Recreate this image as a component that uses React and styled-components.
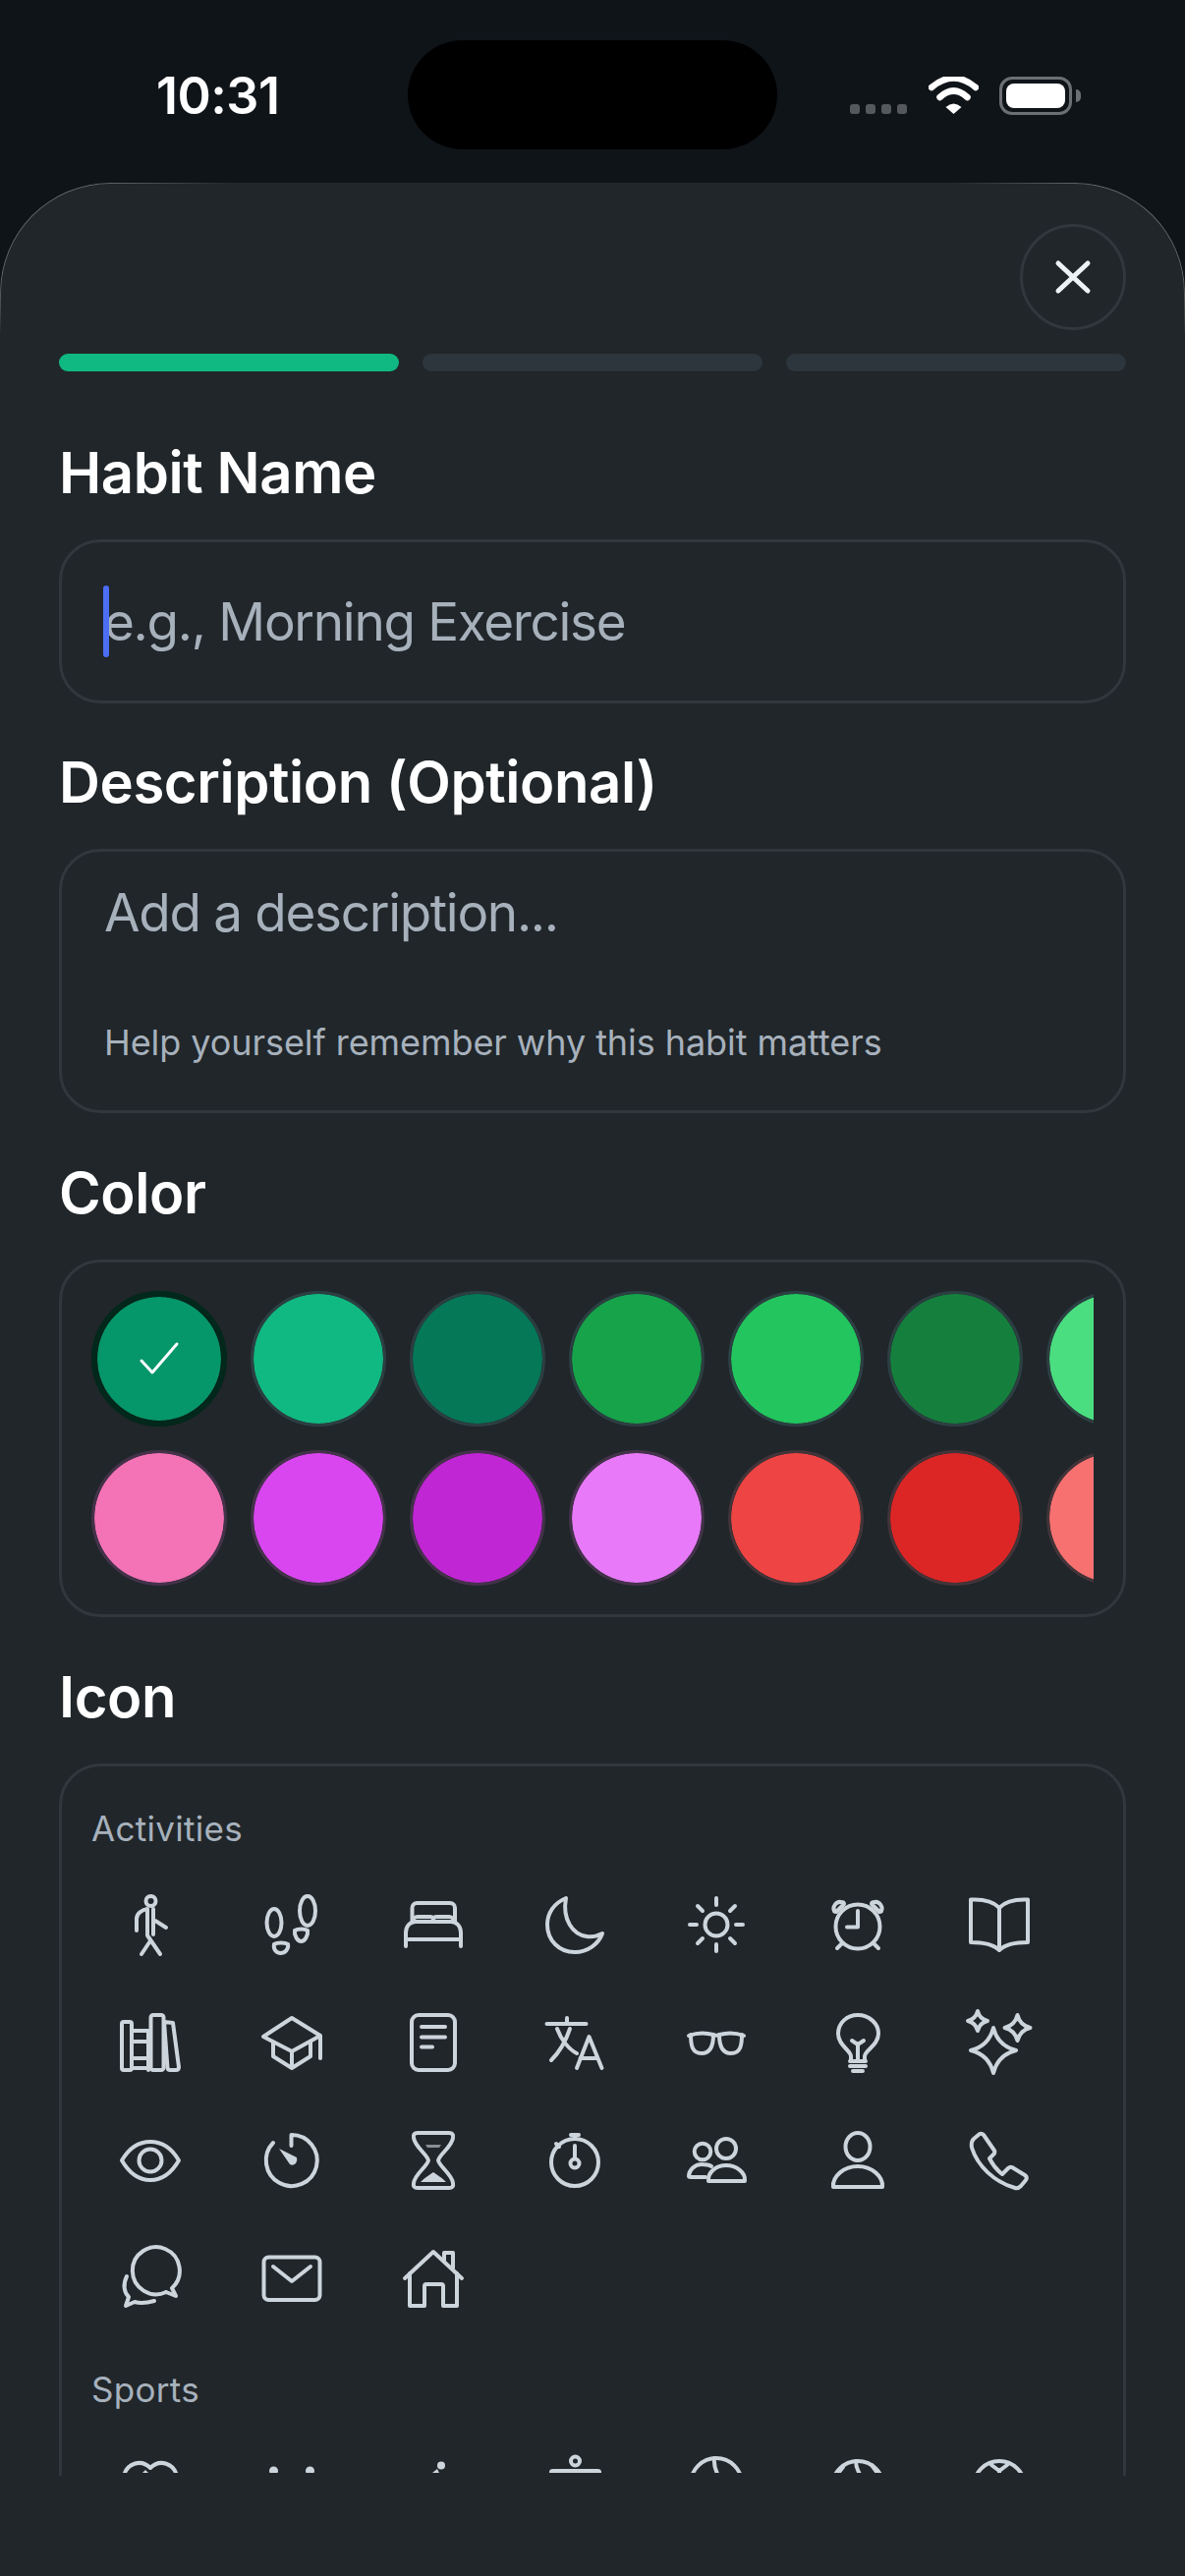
import styled, { createGlobalStyle } from 'styled-components';

const GlobalStyle = createGlobalStyle`
  html, body {
    margin: 0;
    padding: 0;
    background: #0f1419;
  }
  * {
    box-sizing: border-box;
  }
`;

const Screen = styled.div`
  width: 1206px;
  height: 2622px;
  overflow: hidden;
  display: flex;
  flex-direction: column;
  background: #0f1419;
  font-family: Inter, "Liberation Sans", sans-serif;
  color: #fff;
`;

const StatusBar = styled.div`
  height: 186px;
  flex-shrink: 0;
  display: grid;
  grid-template-columns: 415px 376px 1fr;
  align-items: start;
`;
const Time = styled.div`
  padding: 72px 0 0 159px;
  font-size: 52px;
  line-height: 52px;
  font-weight: 600;
  letter-spacing: -0.5px;
`;
const Island = styled.div`
  margin-top: 41px;
  height: 111px;
  border-radius: 56px;
  background: #000;
`;
const StatusIcons = styled.div`
  padding: 78px 0 0 74px;
  display: flex;
  align-items: flex-start;
`;
const SignalDots = styled.div`
  display: flex;
  gap: 6px;
  margin-top: 28px;
`;
const SignalDot = styled.span`
  width: 10px;
  height: 10px;
  border-radius: 3px;
  background: #55595e;
`;
const WifiIcon = styled.svg`
  width: 51px;
  height: 38px;
  margin-left: 22px;
`;
const Battery = styled.div`
  width: 74px;
  height: 39px;
  margin-left: 21px;
  padding: 4px;
  border: 3px solid #6c7074;
  border-radius: 13px;
  position: relative;

  &::before {
    content: '';
    display: block;
    height: 100%;
    border-radius: 8px;
    background: #fff;
  }
  &::after {
    content: '';
    position: absolute;
    right: -12px;
    top: 10px;
    width: 5px;
    height: 13px;
    border-radius: 0 6px 6px 0;
    background: #6c7074;
  }
`;

const Sheet = styled.div`
  flex: 1;
  position: relative;
  display: flex;
  flex-direction: column;
  padding: 0 60px;
  background: #20262a;
  border-radius: 112px 112px 0 0;

  /* hairline only shows round the two top corners */
  &::before {
    content: '';
    position: absolute;
    inset: 0;
    height: 170px;
    border: 1px solid rgba(255, 255, 255, 0.32);
    border-bottom: none;
    border-radius: 112px 112px 0 0;
    pointer-events: none;
    -webkit-mask-image: radial-gradient(ellipse 50% 100% at 50% 0, transparent 60%, #000 85%, #000 115%, transparent 135%);
    mask-image: radial-gradient(ellipse 50% 100% at 50% 0, transparent 60%, #000 85%, #000 115%, transparent 135%);
  }
`;
const CloseRow = styled.div`
  display: flex;
  justify-content: flex-end;
  padding-top: 42px;
`;
const CloseButton = styled.button`
  width: 108px;
  height: 108px;
  padding: 0;
  display: flex;
  align-items: center;
  justify-content: center;
  border: 3px solid #30373d;
  border-radius: 50%;
  background: transparent;
  color: #eef2f5;
`;
const Progress = styled.div`
  margin-top: 24px;
  display: grid;
  grid-template-columns: repeat(3, 1fr);
  gap: 24px;
`;
const ProgressStep = styled.div`
  height: 18px;
  border-radius: 9px;
  background: ${(p) => (p.$active ? '#10b981' : '#2d363c')};
`;

const Form = styled.div`
  height: 2142px;
  overflow: hidden;
`;
const Label = styled.div`
  margin: ${(p) => (p.$first ? '70px' : '48px')} 0 35px;
  font-size: 58px;
  line-height: 66px;
  font-weight: 600;
  letter-spacing: -0.4px;
`;
const Field = styled.div`
  border: 3px solid #30373d;
  border-radius: 42px;
`;
const NameField = styled(Field)`
  height: 167px;
  margin-bottom: -1px;
  padding: 0 43px;
  display: flex;
  align-items: center;
  position: relative;
`;
const Caret = styled.span`
  position: absolute;
  left: 42px;
  top: 44px;
  width: 6px;
  height: 73px;
  border-radius: 3px;
  background: #4c6ef5;
`;
const Placeholder = styled.div`
  font-size: 53px;
  line-height: 62px;
  letter-spacing: -1.3px;
  color: #a7b1bc;
`;
const DescriptionField = styled(Field)`
  height: 269px;
  padding: 31px 43px 0;
`;
const Hint = styled.div`
  margin-top: 79px;
  font-size: 36px;
  line-height: 44px;
  letter-spacing: -0.07px;
  color: #a7b1bc;
`;

const ColorBox = styled(Field)`
  height: 364px;
  padding: 29px 30px;
`;
const ColorScroll = styled.div`
  overflow: hidden;
  display: flex;
  flex-direction: column;
  gap: 24px;
`;
const ColorRow = styled.div`
  display: flex;
  gap: 24px;
`;
const Swatch = styled.div`
  width: 138px;
  height: 138px;
  flex-shrink: 0;
  display: flex;
  align-items: center;
  justify-content: center;
  border-radius: 50%;
  border: ${(p) => (p.$selected ? '6px' : '3px')} solid ${(p) => p.$ring};
  background: ${(p) => p.$fill};
  background-clip: padding-box;
`;

const IconBox = styled(Field)`
  height: 725px;
  border-bottom: none;
  border-radius: 42px 42px 0 0;
  overflow: hidden;
`;
const IconScroll = styled.div`
  height: 719px;
  overflow: hidden;
  padding: 30px 30px 0;
`;
const Group = styled.div`
  & + & {
    margin-top: 20px;
  }
`;
const GroupTitle = styled.div`
  margin-bottom: 5px;
  font-size: 35px;
  line-height: 66px;
  color: #a7b1bc;
  letter-spacing: 0.3px;
`;
const IconGrid = styled.div`
  display: grid;
  grid-template-columns: repeat(7, 120px);
  grid-auto-rows: 120px;
  column-gap: 24px;
`;
const IconCell = styled.div`
  display: flex;
  align-items: center;
  justify-content: center;
`;
const IconSvg = styled.svg`
  width: 60px;
  height: 60px;
  overflow: visible;
  fill: none;
  stroke: #cdd5dc;
  stroke-width: 4;
  stroke-linecap: round;
  stroke-linejoin: round;
`;
const Solid = styled.g`
  fill: #cdd5dc;
  stroke: none;
`;

const star = (cx, cy, r) => {
  const k = r * 0.2;
  return `M${cx} ${cy - r}Q${cx + k} ${cy - k} ${cx + r} ${cy}Q${cx + k} ${cy + k} ${cx} ${cy + r}Q${cx - k} ${cy + k} ${cx - r} ${cy}Q${cx - k} ${cy - k} ${cx} ${cy - r}Z`;
};

const activityIcons = [
  <>
    <circle cx="30.5" cy="6" r="5" />
    <path d="M27 14C21 15 16 19 16 24V36M27 14V41L40 60M33 14V40M35 26L46 33M29 48L21 60" />
  </>,
  <>
    <ellipse cx="12" cy="28" rx="7.5" ry="14" />
    <ellipse cx="46" cy="16" rx="8" ry="15" />
    <path d="M12 50C15 48 23 48 26 50C27 55 23 59 18.5 59C14 59 11 55 12 50Z" />
    <path d="M33 36C36 34 43 34 46 36C47 41 43 47 39.5 47C36 47 32 41 33 36Z" />
  </>,
  <>
    <path d="M8.5 27V13A5 5 0 0 1 13.5 8H47A5 5 0 0 1 52 13V27" />
    <path d="M9 27C10 22 12 22 14 22H27Q29 22 30 24Q31 22 33 22H46C48 22 50 22 51 27" />
    <path d="M2 52V38C2 32 6 27 12 27H48C54 27 58 32 58 38V52M2 45H58" />
  </>,
  <path d="M21 3C9 8 2 18 2 30C2 46 14 58 30 58C43 58 54 50 58 39C52 42 47 43 42 42C28 40 17 25 21 3Z" />,
  <>
    <circle cx="30" cy="30" r="11.5" />
    <path d="M30 3V10M30 50V57M3 30H10M50 30H57M11 11L16 16M44 44L49 49M49 11L44 16M16 44L11 49" />
  </>,
  <>
    <circle cx="30" cy="32" r="22.5" />
    <path d="M30 16V32.5H19M9 54L14 49M51 54L46 49" />
    <path d="M6 16C4 12 8 6 13 7C15 7 16 8 16 9L8 17C7 17 6 17 6 16Z" />
    <path d="M54 16C56 12 52 6 47 7C45 7 44 8 44 9L52 17C53 17 54 17 54 16Z" />
  </>,
  <path d="M30 13C24 6 12 4 1 4.5V48C12 48 24 50 30 56C36 50 48 48 59 48V4.5C48 4 36 6 30 13V56" />,

  <>
    <rect x="1" y="9" width="10" height="49" rx="2" />
    <rect x="30.5" y="2" width="13" height="56" rx="2.5" />
    <path d="M11 18H28M11 29H28M11 46H28M11 56H28M28 18V58" />
    <path d="M44 9L53 10L59 55Q59 58 56 58L50 58Q48 58 47.5 56Z" />
  </>,
  <path d="M30 5L1 24L30 39L59 23ZM11 29V44L30 56L49 44V29M30 39V56M59 23V46" />,
  <>
    <rect x="8" y="2" width="44" height="56" rx="7" />
    <path d="M18 14H42M18 24.5H42M18 34.5H29" />
  </>,
  <path d="M1.5 11H41.5M22 5V11M12 16C16 27 24 37 32 41M25 16C21 28 14 40 6 48M32 56L44.5 24L57.5 56M35.5 46H53.5" />,
  <>
    <path d="M2 23C10 20 20 20 27 22C29 23 31 23 33 22C40 20 50 20 58 23" />
    <path d="M4 22C4 32 5 41 15 41C24 41 27 33 27 22M33 22C33 33 36 41 45 41C55 41 56 32 56 22" />
  </>,
  <>
    <path d="M23 48V44C23 38 10 33 10 21C10 10 19 2 30 2C41 2 51 10 51 21C51 33 37 38 37 44V48" />
    <path d="M30 48V31M24 28L30 32L36 28M22 49H38M22 54H38M25 59H35" />
  </>,
  <>
    <path d={star(24, 38, 23)} />
    <path d={star(8, 8, 10)} />
    <path d={star(48.5, 15, 13)} />
  </>,

  <>
    <path d="M1 30C8 18 18 11 30 11C42 11 52 18 59 30C52 42 42 50 30 50C18 50 8 42 1 30Z" />
    <circle cx="30" cy="30" r="11.5" />
  </>,
  <>
    <path d="M29.5 15V4A26 26 0 1 1 11 12" />
    <Solid>
      <path d="M17 18L35 27Q36 30 34 33Q31 36 28 34Z" />
    </Solid>
  </>,
  <>
    <path d="M14 2H46Q51 2 50 7C49 16 36 24 35 30C36 36 49 44 50 53Q51 58 46 58H14Q9 58 10 53C11 44 24 36 25 30C24 24 11 16 10 7Q9 2 14 2Z" />
    <Solid>
      <path d="M17 52C22 47 27 44 30 42C33 44 38 47 43 52Z" />
      <path d="M22 14H38L36 17H24Z" opacity="0.6" />
    </Solid>
  </>,
  <>
    <circle cx="30" cy="32" r="24" />
    <circle cx="30" cy="33" r="4.5" />
    <path d="M30 15V28M30 4V8M26 4H34M11 13L14 16" />
  </>,
  <>
    <circle cx="16" cy="21" r="8.3" />
    <circle cx="40" cy="18" r="10" />
    <path d="M22 51C21 42 30 35 40 35C50 35 60 42 59 51Z" />
    <path d="M25 36C22 34 18 34 15 34C8 34 2 40 2 46Q2 47 4 47H19" />
  </>,
  <>
    <ellipse cx="30" cy="16" rx="12.5" ry="14" />
    <path d="M5 57C4 46 16 36 30 36C44 36 56 46 55 57Z" />
  </>,
  <path d="M4 8L10 3Q12 2 14 4L25 20Q26 22 24 24L20 28C23 34 28 40 33 44L39 38Q41 36 43 37L56 45Q59 47 57 50L52 56Q49 59 46 58C25 52 8 36 2 17Q1 11 4 8Z" />,

  <>
    <path d="M46 44L56 48L52 40A24 24 0 1 0 46 44" />
    <path d="M6 28C2 36 3 44 8 49L5 58L14 54C20 56 27 55 34 53" />
  </>,
  <>
    <rect x="1.5" y="8.5" width="57" height="43.5" rx="5" />
    <path d="M11 18L30 33L49 18" />
  </>,
  <>
    <path d="M1 30L30 3L59 30M41 12V4H50V20" />
    <path d="M6 25V58H21V38Q21 36 23 36H38Q40 36 40 38V58H54V25" />
  </>,
];

const sportIcons = [
  <>
    <path d="M3 20C6 8 20 2 30 12C40 2 54 8 57 20" />
    <Solid>
      <path d="M22 17L25 14L28 17Z" />
    </Solid>
  </>,
  <Solid>
    <circle cx="11.5" cy="15" r="4.5" />
    <circle cx="48.5" cy="15" r="4.5" />
  </Solid>,
  <Solid>
    <circle cx="38" cy="9.5" r="4" />
    <path d="M29 17L34 13L36 17Z" />
  </Solid>,
  <>
    <circle cx="30.5" cy="5" r="4.5" />
    <path d="M6 16Q6 15 8 15H53Q55 15 55 16V20H6Z" />
  </>,
  <>
    <circle cx="30" cy="28" r="26" />
    <path d="M28 2Q27 10 32 20" />
  </>,
  <>
    <circle cx="30" cy="31" r="26" />
    <path d="M28 5Q28 12 33 20M8 20L15 11M52 20L44 9" />
  </>,
  <>
    <circle cx="30" cy="31" r="26" />
    <path d="M22 9L30 15L38 9M30 15V20" />
  </>,
];

const colorRows = [
  {
    ring: '#2c3f42',
    colors: ['#059669', '#10b981', '#047857', '#16a34a', '#22c55e', '#15803d', '#4ade80'],
  },
  {
    ring: '#44324a',
    colors: ['#f472b6', '#d946ef', '#c026d3', '#e879f9', '#ef4444', '#dc2626', '#f87171'],
  },
];

function Icon({ children }) {
  return (
    <IconCell>
      <IconSvg viewBox="0 0 60 60">{children}</IconSvg>
    </IconCell>
  );
}

export default function App() {
  return (
    <>
      <GlobalStyle />
      <Screen>
        <StatusBar>
          <Time>10:31</Time>
          <Island />
          <StatusIcons>
            <SignalDots>
              <SignalDot />
              <SignalDot />
              <SignalDot />
              <SignalDot />
            </SignalDots>
            <WifiIcon viewBox="0 0 51 38">
              <path d="M3 11Q25.5 -8 48 11" fill="none" stroke="#fff" strokeWidth="6.5" strokeLinecap="round" />
              <path d="M11.5 21Q25.5 8 39.5 21" fill="none" stroke="#fff" strokeWidth="6.5" strokeLinecap="round" />
              <path d="M17.5 31Q25.5 24 33.5 31L25.5 38Z" fill="#fff" />
            </WifiIcon>
            <Battery />
          </StatusIcons>
        </StatusBar>

        <Sheet>
          <CloseRow>
            <CloseButton aria-label="Close">
              <svg width="38" height="36" viewBox="0 0 38 36" fill="none" stroke="currentColor" strokeWidth="5" strokeLinecap="round">
                <path d="M4 4L34 32M34 4L4 32" />
              </svg>
            </CloseButton>
          </CloseRow>
          <Progress>
            <ProgressStep $active />
            <ProgressStep />
            <ProgressStep />
          </Progress>

          <Form>
            <Label $first>Habit Name</Label>
            <NameField>
              <Caret />
              <Placeholder>e.g., Morning Exercise</Placeholder>
            </NameField>

            <Label>Description (Optional)</Label>
            <DescriptionField>
              <Placeholder>Add a description...</Placeholder>
              <Hint>Help yourself remember why this habit matters</Hint>
            </DescriptionField>

            <Label>Color</Label>
            <ColorBox>
              <ColorScroll>
                {colorRows.map((row) => (
                  <ColorRow key={row.ring}>
                    {row.colors.map((color, index) => {
                      const selected = color === '#059669';
                      return (
                        <Swatch
                          key={color}
                          $fill={color}
                          $selected={selected}
                          $ring={selected ? '#01281a' : index > 3 && row.ring === '#44324a' ? '#423439' : row.ring}
                        >
                          {selected && (
                            <svg width="44" height="44" viewBox="0 0 44 44" fill="none" stroke="#fff" strokeWidth="3" strokeLinecap="round" strokeLinejoin="round">
                              <path d="M4 24L15 36L40 7" />
                            </svg>
                          )}
                        </Swatch>
                      );
                    })}
                  </ColorRow>
                ))}
              </ColorScroll>
            </ColorBox>

            <Label>Icon</Label>
            <IconBox>
              <IconScroll>
                <Group>
                  <GroupTitle>Activities</GroupTitle>
                  <IconGrid>
                    {activityIcons.map((icon, index) => (
                      <Icon key={index}>{icon}</Icon>
                    ))}
                  </IconGrid>
                </Group>
                <Group>
                  <GroupTitle>Sports</GroupTitle>
                  <IconGrid>
                    {sportIcons.map((icon, index) => (
                      <Icon key={index}>{icon}</Icon>
                    ))}
                  </IconGrid>
                </Group>
              </IconScroll>
            </IconBox>
          </Form>
        </Sheet>
      </Screen>
    </>
  );
}
